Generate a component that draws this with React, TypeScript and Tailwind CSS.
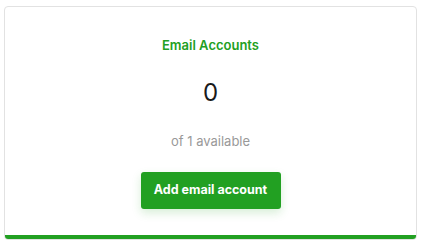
export default function App() {
  return (
    <div className="w-[421px] h-[243px] bg-white pt-[6px] pl-[4px]" style={{ fontFamily: "Inter, 'Liberation Sans', sans-serif" }}>
      <div className="w-[413px] h-[234px] border border-[#e2e2e2] rounded-[4px] overflow-hidden flex flex-col bg-white">
        <div className="flex-1 flex flex-col items-center pt-[30px]">
          <div className="text-[13px] leading-[16px] font-semibold text-[#22a022]">Email Accounts</div>
          <div className="mt-[24px] text-[24px] leading-[32px] text-[#1a1a1a]">0</div>
          <div className="mt-[24px] text-[13px] leading-[16px] text-[#999999]">of 1 available</div>
          <button className="mt-[23px] w-[140px] h-[37px] rounded-[3px] bg-[#22a022] text-white text-[12.5px] font-bold shadow-[0_4px_10px_rgba(34,160,34,0.18)]">Add email account</button>
        </div>
        <div className="h-[4px] bg-[#22a022]" />
      </div>
    </div>
  );
}
